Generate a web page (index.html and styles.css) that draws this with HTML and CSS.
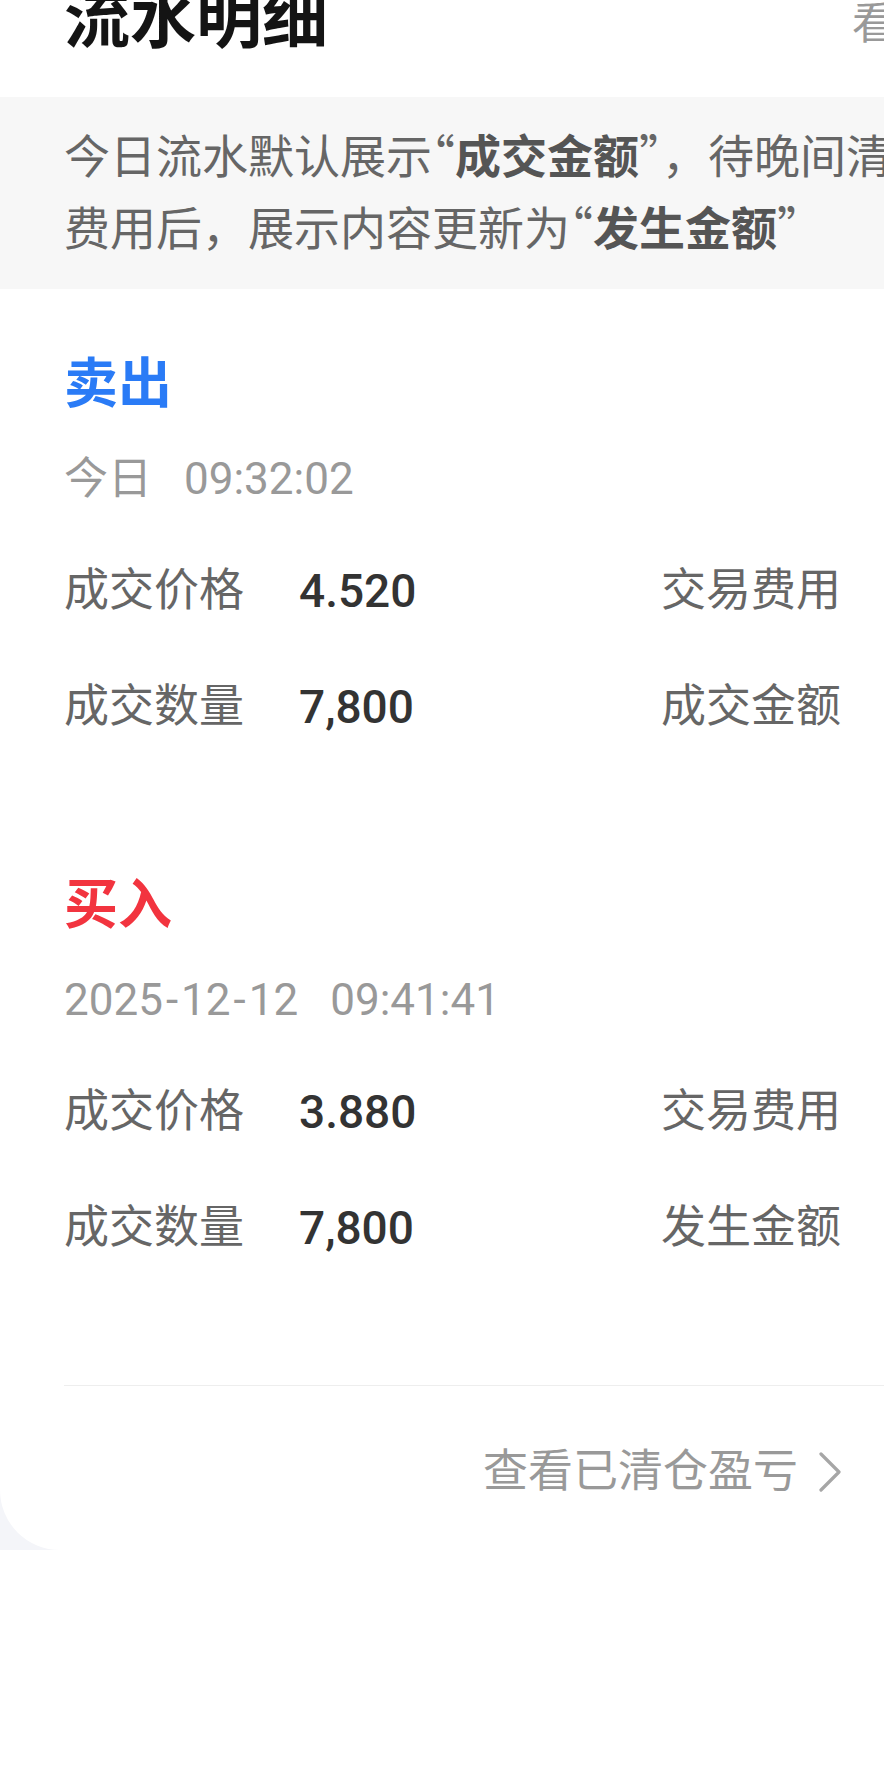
FILE: index.html
```html
<!DOCTYPE html>
<html lang="zh-CN">
<head>
<meta charset="utf-8">
<title>流水明细</title>
<link rel="stylesheet" href="styles.css">
</head>
<body>
<div class="page">
  <div class="card">
    <header class="head">
      <h1 class="title">流水明细</h1>
      <span class="more">看</span>
    </header>
    <p class="notice">今日流水默认展示<span class="q">“</span><b>成交金额</b><span class="q">”</span>，待晚间清算交易<br>费用后，展示内容更新为<span class="q">“</span><b>发生金额</b><span class="q">”</span></p>

    <section class="trade">
      <div class="side sell">卖出</div>
      <div class="time">今日<span class="clock">09:32:02</span></div>
      <div class="row"><span class="label">成交价格</span><span class="value">4.520</span><span class="label">交易费用</span></div>
      <div class="row"><span class="label">成交数量</span><span class="value">7,800</span><span class="label">成交金额</span></div>
    </section>

    <section class="trade">
      <div class="side buy">买入</div>
      <div class="time">2025<span class="dash">-</span>12<span class="dash">-</span>12<span class="clock">09:41:41</span></div>
      <div class="row"><span class="label">成交价格</span><span class="value">3.880</span><span class="label">交易费用</span></div>
      <div class="row"><span class="label">成交数量</span><span class="value">7,800</span><span class="label">发生金额</span></div>
    </section>

    <div class="footer">
      <a class="link">查看已清仓盈亏<svg class="chev" width="22" height="40" viewBox="0 0 22 40"><polyline points="2,2 20,20 2,38" fill="none" stroke="#a6a6a6" stroke-width="3.2" stroke-linecap="round" stroke-linejoin="round"/></svg></a>
    </div>
  </div>
</div>
</body>
</html>
```

FILE: styles.css
```css
html, body {
  margin: 0;
  padding: 0;
  background: #ffffff;
  overflow: hidden;
}
body {
  font-family: "Roboto", "Noto Sans CJK SC", sans-serif;
  width: 884px;
}
.page {
  background: #f4f5f9;
  overflow: hidden;
}
.card {
  width: 1324px;
  background: #ffffff;
  border-bottom-left-radius: 60px;
  border-bottom-right-radius: 60px;
}
.head {
  display: grid;
  grid-template-columns: 788px auto;
  align-items: start;
  height: 97px;
  margin: 0 64px;
}
.title {
  margin: -13px 0 0;
  font-size: 66px;
  line-height: 66px;
  font-weight: 700;
  color: #141414;
  white-space: nowrap;
}
.more {
  margin-top: 2px;
  font-size: 44px;
  line-height: 44px;
  color: #999999;
}
.notice {
  margin: 0;
  padding: 24px 64px;
  background: #f7f7f7;
  font-size: 46px;
  line-height: 72px;
  color: #666666;
  white-space: nowrap;
}
.notice b {
  font-weight: 700;
  color: #555555;
}
.q {
  font-family: "Noto Sans CJK SC", sans-serif;
  font-feature-settings: "fwid" 1, "halt" 1;
  line-height: 1;
}
.trade {
  margin: 0 64px;
  padding: 56px 0 45px;
}
.side {
  font-size: 54px;
  line-height: 80px;
  font-weight: 700;
}
.sell { color: #2a7bf6; }
.buy { color: #f2343f; }
.time {
  margin: 24px 0;
  font-size: 44px;
  line-height: 60px;
  color: #999999;
}
.dash {
  margin: 0 3px;
}
.clock {
  margin-left: 32px;
}
.row {
  display: grid;
  grid-template-columns: 235px 362px auto;
  align-items: center;
  height: 116px;
  line-height: 60px;
}
.label {
  font-size: 45px;
  color: #666666;
}
.value {
  font-size: 46px;
  font-weight: 500;
  color: #333333;
}
.footer {
  margin: 54px 64px 0;
  padding: 56px 0 48px;
  border-top: 1px solid #eeeeee;
}
.link {
  display: flex;
  justify-content: center;
  align-items: center;
  gap: 21px;
  font-size: 45px;
  line-height: 60px;
  color: #999999;
}
.chev {
  display: block;
}
```
